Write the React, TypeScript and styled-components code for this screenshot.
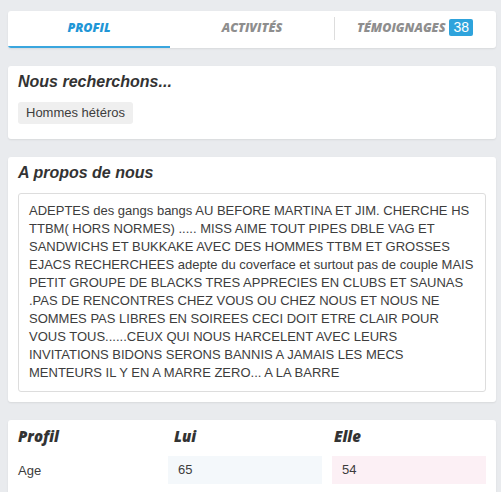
import React from 'react';
import styled, { createGlobalStyle } from 'styled-components';

const COLORS = {
  page: '#e9ebee',
  text: '#3d3d3d',
  heading: '#333333',
  blue: '#2196d6',
  grey: '#8e8e8e',
  line: '#dddddd'
};

const GlobalStyle = createGlobalStyle`
  html, body {
    margin: 0;
    padding: 0;
    background: ${COLORS.page};
  }
  body {
    font-family: 'Liberation Sans', Arial, sans-serif;
    color: ${COLORS.text};
  }
`;

type TabProps = {
  active?: boolean;
};

const about =
  'ADEPTES des gangs bangs AU BEFORE MARTINA ET JIM. CHERCHE HS TTBM( HORS NORMES) ..... MISS AIME TOUT PIPES DBLE VAG ET SANDWICHS ET BUKKAKE AVEC DES HOMMES TTBM ET GROSSES EJACS RECHERCHEES adepte du coverface et surtout pas de couple MAIS PETIT GROUPE DE BLACKS TRES APPRECIES EN CLUBS ET SAUNAS .PAS DE RENCONTRES CHEZ VOUS OU CHEZ NOUS ET NOUS NE SOMMES PAS LIBRES EN SOIREES CECI DOIT ETRE CLAIR POUR VOUS TOUS......CEUX QUI NOUS HARCELENT AVEC LEURS INVITATIONS BIDONS SERONS BANNIS A JAMAIS LES MECS MENTEURS IL Y EN A MARRE ZERO... A LA BARRE';

// Profile page: tab bar followed by the info cards
const App = () => (
  <Page>
    <GlobalStyle />
    <TabBar>
      <Tab active>PROFIL</Tab>
      <Tab>ACTIVITÉS</Tab>
      <Tab>
        TÉMOIGNAGES <Badge>38</Badge>
      </Tab>
    </TabBar>

    <Card>
      <CardTitle>Nous recherchons...</CardTitle>
      <Tags>
        <Tag>Hommes hétéros</Tag>
      </Tags>
    </Card>

    <Card>
      <CardTitle>A propos de nous</CardTitle>
      <AboutBox>{about}</AboutBox>
    </Card>

    <Card>
      <ProfileGrid>
        <ColHead>Profil</ColHead>
        <ColHead indent={6}>Lui</ColHead>
        <ColHead indent={2}>Elle</ColHead>
        <RowLabel>Age</RowLabel>
        <Value tint="#f4f8fb">65</Value>
        <Value tint="#fcf0f5">54</Value>
      </ProfileGrid>
    </Card>
  </Page>
);

export default App;

const Page = styled.div`
  display: flex;
  flex-direction: column;
  gap: 18px;
  padding: 11px 5px 0 8px;
`;

const TabBar = styled.nav`
  display: grid;
  grid-template-columns: 162px 163px 1fr;
  height: 37px;
  background: #fff;
  border-radius: 3px;
  box-shadow: 0 1px 2px rgba(0, 0, 0, 0.08);
  overflow: hidden;
`;

const Tab = styled.div<TabProps>`
  position: relative;
  display: flex;
  align-items: center;
  justify-content: center;
  gap: 4px;
  padding-bottom: 2px;
  font-family: 'Open Sans', sans-serif;
  font-size: 12.5px;
  font-weight: 800;
  font-style: italic;
  color: ${({ active }) => (active ? COLORS.blue : COLORS.grey)};
  border-bottom: 2px solid
    ${({ active }) => (active ? '#3aa6de' : 'transparent')};
  & + & {
    border-left: 1px solid transparent;
  }
  & + &::before {
    content: '';
    position: absolute;
    left: 0;
    top: 6px;
    bottom: 6px;
    width: 1px;
    background: ${COLORS.line};
  }
`;

const Badge = styled.span`
  display: inline-block;
  padding: 0 4px;
  height: 17px;
  line-height: 17px;
  border-radius: 2px;
  background: #2ea3dc;
  color: #fff;
  font-family: 'Liberation Sans', Arial, sans-serif;
  font-size: 14px;
  font-style: normal;
  font-weight: 400;
`;

const Card = styled.section`
  background: #fff;
  border-radius: 3px;
  box-shadow: 0 1px 2px rgba(0, 0, 0, 0.08);
  padding: 6px 10px 10px;
`;

const CardTitle = styled.h2`
  margin: 0 0 10px;
  font-family: 'Liberation Sans', Arial, sans-serif;
  font-size: 16px;
  line-height: 20px;
  font-weight: 700;
  font-style: italic;
  color: ${COLORS.heading};
`;

const Tags = styled.div`
  display: flex;
  flex-wrap: wrap;
  gap: 6px;
  padding-bottom: 5px;
`;

const Tag = styled.span`
  display: inline-block;
  padding: 0 8px;
  height: 22px;
  line-height: 22px;
  border-radius: 3px;
  background: #efefef;
  font-size: 13px;
  color: ${COLORS.text};
`;

const AboutBox = styled.div`
  border: 1px solid ${COLORS.line};
  border-radius: 3px;
  padding: 8px 10px 9px;
  font-size: 13px;
  line-height: 18px;
  color: ${COLORS.text};
`;

const ProfileGrid = styled.div`
  display: grid;
  grid-template-columns: 140px 1fr 1fr;
  column-gap: 10px;
  row-gap: 10px;
  align-items: center;
  padding-bottom: 4px;
`;

const ColHead = styled.div<{ indent?: number }>`
  padding-left: ${({ indent }) => indent || 0}px;
  font-family: 'Open Sans', sans-serif;
  font-size: 15px;
  line-height: 20px;
  font-weight: 800;
  font-style: italic;
  color: ${COLORS.heading};
`;

const RowLabel = styled.div`
  font-size: 13px;
  color: ${COLORS.text};
`;

const Value = styled.div<{ tint: string }>`
  height: 28px;
  line-height: 28px;
  padding: 0 10px;
  background: ${({ tint }) => tint};
  font-size: 13px;
  color: ${COLORS.text};
`;
